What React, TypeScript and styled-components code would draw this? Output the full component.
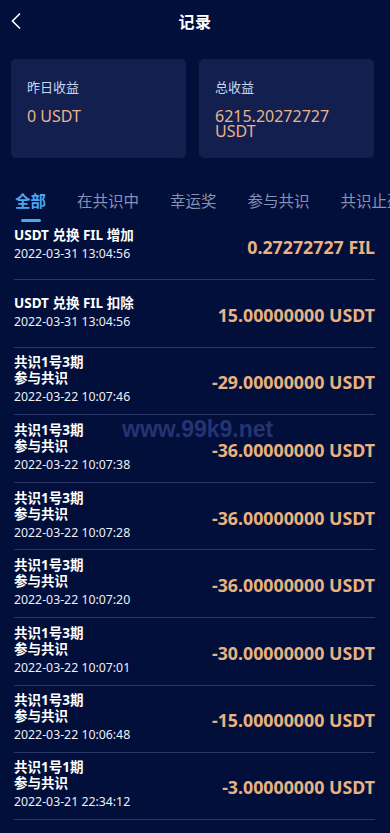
import React, { useState } from 'react'
import styled, { createGlobalStyle } from 'styled-components';

type Record = { id: string; title: string[]; time: string; amount: string };

const records: Record[] = [
    { id: 'r1', title: ['USDT 兑换 FIL 增加'], time: '2022-03-31 13:04:56', amount: '0.27272727 FIL' },
    { id: 'r2', title: ['USDT 兑换 FIL 扣除'], time: '2022-03-31 13:04:56', amount: '15.00000000 USDT' },
    { id: 'r3', title: ['共识1号3期', '参与共识'], time: '2022-03-22 10:07:46', amount: '-29.00000000 USDT' },
    { id: 'r4', title: ['共识1号3期', '参与共识'], time: '2022-03-22 10:07:38', amount: '-36.00000000 USDT' },
    { id: 'r5', title: ['共识1号3期', '参与共识'], time: '2022-03-22 10:07:28', amount: '-36.00000000 USDT' },
    { id: 'r6', title: ['共识1号3期', '参与共识'], time: '2022-03-22 10:07:20', amount: '-36.00000000 USDT' },
    { id: 'r7', title: ['共识1号3期', '参与共识'], time: '2022-03-22 10:07:01', amount: '-30.00000000 USDT' },
    { id: 'r8', title: ['共识1号3期', '参与共识'], time: '2022-03-22 10:06:48', amount: '-15.00000000 USDT' },
    { id: 'r9', title: ['共识1号1期', '参与共识'], time: '2022-03-21 22:34:12', amount: '-3.00000000 USDT' },
]

const tabs = ['全部', '在共识中', '幸运奖', '参与共识', '共识止盈']

const App = () => {
    const [active, setActive] = useState(0);
    return (
        <Page>
            <GlobalStyle />
            <Header>
                <BackButton>
                    <svg width="12" height="18" viewBox="0 0 12 18" fill="none">
                        <path d="M10 1.5L2.5 9l7.5 7.5" stroke="#ffffff" strokeWidth="1.6" />
                    </svg>
                </BackButton>
                <Title>记录</Title>
            </Header>

            <Cards>
                <Card>
                    <CardLabel>昨日收益</CardLabel>
                    <CardValue>0 USDT</CardValue>
                </Card>
                <Card>
                    <CardLabel>总收益</CardLabel>
                    <CardValue>6215.20272727 USDT</CardValue>
                </Card>
            </Cards>

            <Tabs>
                {tabs.map((t, i) => (
                    <Tab key={t} $active={i === active} onClick={() => setActive(i)}>{t}</Tab>
                ))}
            </Tabs>

            <List>
                {records.map((r, i) => (
                    <Row key={r.id} $first={i === 0}>
                        <Info>
                            <RowTitle>{r.title.map((l) => <div key={l}>{l}</div>)}</RowTitle>
                            <Time>{r.time}</Time>
                        </Info>
                        <Amount>{r.amount}</Amount>
                    </Row>
                ))}
            </List>

            <Watermark>www.99k9.net</Watermark>
        </Page>
    )
}

const GlobalStyle = createGlobalStyle`
    html, body {
        margin:0;
        background:#020f3b;
    }
    * { box-sizing:border-box; }
`;

const Page = styled.div`
    position:relative;
    width:390px;
    min-height:833px;
    overflow:hidden;
    background:#020f3b;
    color:#ffffff;
    font-family:"Noto Sans", "Noto Sans CJK SC", sans-serif;
`;

const Header = styled.div`
    position:relative;
    height:45px;
    display:flex;
    align-items:center;
    justify-content:center;
    padding-bottom:4px;
`;

const BackButton = styled.div`
    position:absolute;
    left:10px;
    top:12px;
    display:flex;
`;

const Title = styled.div`
    font-size:16px;
    font-weight:700;
    letter-spacing:0.5px;
`;

const Cards = styled.div`
    display:grid;
    grid-template-columns:1fr 1fr;
    gap:13px;
    padding:14px 16px 0 11px;
`;

const Card = styled.div`
    height:99px;
    background:#13204f;
    border-radius:5px;
    padding:19px 16px 0 16px;
`;

const CardLabel = styled.div`
    font-size:13px;
    line-height:18px;
    color:#cad6f6;
`;

const CardValue = styled.div`
    margin-top:13px;
    font-size:16px;
    line-height:15px;
    color:#e8b48c;
    word-break:break-word;
`;

const Tabs = styled.div`
    display:flex;
    gap:31px;
    padding:33px 0 0 15px;
    white-space:nowrap;
    overflow:hidden;
`;

const Tab = styled.div<{ $active: boolean }>`
    position:relative;
    flex-shrink:0;
    font-size:15.5px;
    line-height:20px;
    padding-bottom:11px;
    color:${(p) => (p.$active ? '#4aa8f0' : '#8792b2')};
    font-weight:${(p) => (p.$active ? 700 : 400)};
    cursor:pointer;

    &::after{
        content:'';
        display:${(p) => (p.$active ? 'block' : 'none')};
        position:absolute;
        left:50%;
        transform:translateX(-50%);
        bottom:0;
        width:20px;
        height:3px;
        border-radius:2px;
        background:#4aa8f0;
    }
`;

const List = styled.div`
    padding:0 15px 0 14px;
`;

const Row = styled.div<{ $first: boolean }>`
    display:flex;
    align-items:center;
    justify-content:space-between;
    height:${(p) => (p.$first ? '57px' : '67.6px')};
    padding-bottom:${(p) => (p.$first ? '13px' : '3px')};
    border-top:${(p) => (p.$first ? 'none' : '1px solid #2b3668')};

    &:last-child{
        border-bottom:1px solid #2b3668;
    }
`;

const Info = styled.div`
    display:flex;
    flex-direction:column;
`;

const RowTitle = styled.div`
    font-size:13.5px;
    line-height:16px;
    font-weight:700;
    color:#ffffff;
`;

const Time = styled.div`
    margin-top:3px;
    font-size:12.3px;
    line-height:15px;
    color:#eef1f8;
`;

const Amount = styled.div`
    padding-top:6px;
    font-size:17.8px;
    font-weight:700;
    color:#e9b27f;
    white-space:nowrap;
`;

const Watermark = styled.div`
    position:absolute;
    left:122px;
    top:416px;
    font-family:"Liberation Sans", Arial, sans-serif;
    font-size:23px;
    font-weight:700;
    color:rgba(58, 74, 150, 0.65);
    pointer-events:none;
`;

export default App;
